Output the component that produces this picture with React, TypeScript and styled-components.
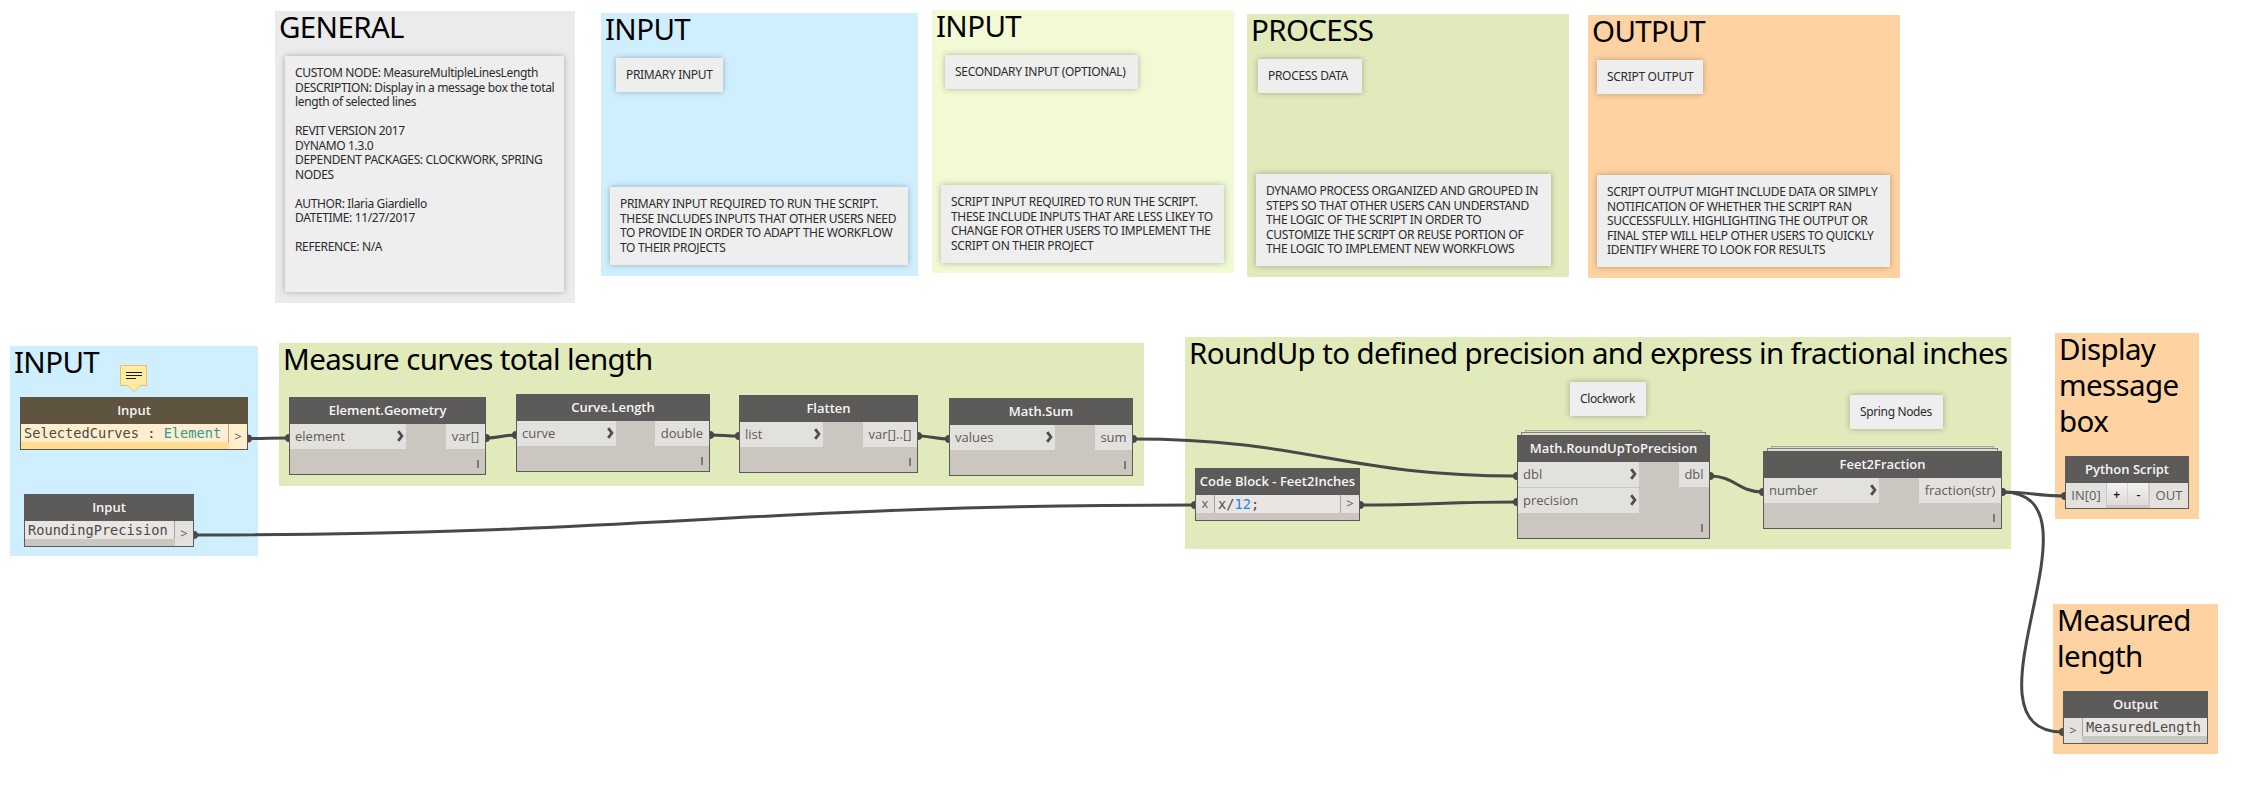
import React from 'react';
import styled, { createGlobalStyle } from 'styled-components';

const Global = createGlobalStyle`
  * { box-sizing: border-box; }
  body { margin: 0; background: #fff; }
`;

const tones = {
  gray: '#ebebeb',
  blue: '#cfefff',
  lime: '#f1fad5',
  green: '#e0eabb',
  orange: '#ffd2a2',
};
type Tone = keyof typeof tones;

interface Place {
  $x: number;
  $y: number;
  $w: number;
  $h: number;
}

const Canvas = styled.main`
  position: relative;
  width: 2250px;
  height: 790px;
  overflow: hidden;
  background: #fff;
`;

/* ---- groups ---- */

const Group = styled.section<Place & { $tone: Tone }>`
  position: absolute;
  left: ${(p) => p.$x}px;
  top: ${(p) => p.$y}px;
  width: ${(p) => p.$w}px;
  height: ${(p) => p.$h}px;
  padding: 0 0 0 4px;
  background: ${(p) => tones[p.$tone]};
`;

const GroupTitle = styled.h2`
  margin: -2px 0 0;
  font: 400 29.5px/36px 'Noto Sans', 'Open Sans', sans-serif;
  letter-spacing: -0.63px;
  color: #000;
  white-space: pre;
`;

/* ---- notes ---- */

const NoteCard = styled.article<Place & { $tight?: boolean }>`
  position: absolute;
  left: ${(p) => p.$x}px;
  top: ${(p) => p.$y}px;
  width: ${(p) => p.$w}px;
  height: ${(p) => p.$h}px;
  padding: 10px 0 0 10px;
  background: #eee;
  box-shadow: 0 0 6px rgba(0, 0, 0, 0.28);
  font: 400 12px/14.5px 'Noto Sans', 'Open Sans', sans-serif;
  letter-spacing: ${(p) => (p.$tight ? '-0.36px' : '-0.31px')};
  color: #2b2b2b;
  white-space: pre;
`;

/* ---- nodes ---- */

const NodeFrame = styled.article<Place & { $warm?: boolean }>`
  position: absolute;
  left: ${(p) => p.$x}px;
  top: ${(p) => p.$y}px;
  width: ${(p) => p.$w}px;
  height: ${(p) => p.$h}px;
  display: flex;
  flex-direction: column;
  border: 1px solid ${(p) => (p.$warm ? '#5e5440' : '#5d5b59')};
  background: ${(p) => (p.$warm ? '#ffdc92' : '#cbc6bf')};
  font-family: 'Open Sans', 'Noto Sans', sans-serif;
  font-size: 13px;
`;

const NodeHeader = styled.header<{ $warm?: boolean }>`
  flex: none;
  height: 26px;
  background: ${(p) => (p.$warm ? '#5e5440' : '#5d5b59')};
  color: #f6f6f5;
  font-weight: 600;
  line-height: 25px;
  text-align: center;
  white-space: nowrap;
`;

const PortArea = styled.div`
  display: flex;
  justify-content: space-between;
  align-items: flex-start;
`;

const PortColumn = styled.div<{ $w: number }>`
  display: flex;
  flex-direction: column;
  gap: 1px;
  width: ${(p) => p.$w}px;
`;

const Port = styled.div<{ $end?: boolean }>`
  display: flex;
  align-items: center;
  justify-content: ${(p) => (p.$end ? 'center' : 'space-between')};
  height: 25px;
  padding: 0 ${(p) => (p.$end ? 0 : 1)}px 1px ${(p) => (p.$end ? 0 : 5)}px;
  background: #e3e1de;
  color: #5d5b59;
  white-space: nowrap;
`;

const NodeFooter = styled.footer`
  display: flex;
  flex: 1;
  align-items: flex-end;
  justify-content: flex-end;
  padding: 6px;
`;

const LacingMark = styled.i`
  width: 2px;
  height: 8px;
  background: #7c7a76;
`;

const StackedSheet = styled.div<Place & { $back?: boolean }>`
  position: absolute;
  left: ${(p) => p.$x}px;
  top: ${(p) => p.$y}px;
  width: ${(p) => p.$w}px;
  height: ${(p) => p.$h}px;
  border: 1px solid ${(p) => (p.$back ? '#a6a79a' : '#82827b')};
  background: #dcdbd0;
`;

/* ---- code style nodes ---- */

const CodeRow = styled.div`
  display: flex;
  align-items: stretch;
  height: 25px;
`;

const CodeColumn = styled.div<{ $side?: 'left' | 'right' | 'both'; $warm?: boolean }>`
  flex: 1;
  height: 18px;
  padding-left: 3px;
  border: 0 solid ${(p) => (p.$warm ? '#aba8a2' : '#a3a3a3')};
  border-left-width: ${(p) => (p.$side === 'left' || p.$side === 'both' ? 1 : 0)}px;
  border-right-width: ${(p) => (p.$side === 'right' || p.$side === 'both' ? 1 : 0)}px;
  background: ${(p) => (p.$warm ? '#ffeece' : '#e8e5e2')};
  color: #4b4a48;
  font: 13.65px/18px 'DejaVu Sans Mono', 'Liberation Mono', monospace;
  white-space: pre;
`;

const SidePort = styled.div<{ $warm?: boolean; $short?: boolean }>`
  width: 18px;
  height: ${(p) => (p.$short ? 18 : 25)}px;
  background: ${(p) => (p.$warm ? '#ffeece' : '#e3e1de')};
  color: #5d5b59;
  line-height: ${(p) => (p.$short ? 17 : 24)}px;
  text-align: center;
`;

const TypeName = styled.span`
  color: #2f9b90;
`;

const NumberLiteral = styled.span`
  color: #2585e5;
`;

const PythonRow = styled.div`
  display: grid;
  grid-template-columns: 40px 21px 21px 38px;
  column-gap: 0.66px;
  height: 25px;
`;

const StepButton = styled.button`
  height: 22px;
  padding: 0;
  border: 0;
  border-right: 1px solid #d5d1cc;
  background: linear-gradient(#f3f2f1, #dfdbd6);
  color: #111;
  font: 600 12px/19px 'Open Sans', 'Noto Sans', sans-serif;
`;

/* ---- overlays ---- */

const Wires = styled.svg`
  position: absolute;
  inset: 0;
`;

const CommentIcon = styled.svg`
  position: absolute;
  left: 120px;
  top: 365px;
`;

const Chevron = () => (
  <svg width="8" height="12" viewBox="0 0 8 12">
    <path d="M1.2 1.2 L4.9 6 L1.2 10.8" fill="none" stroke="#4f4e4c" strokeWidth="2.8" />
  </svg>
);

interface NodeProps {
  x: number;
  y: number;
  w: number;
  h?: number;
  title: string;
  inputs: string[];
  output: string;
  inW: number;
  outW: number;
}

const FunctionNode = ({ x, y, w, h = 78, title, inputs, output, inW, outW }: NodeProps) => (
  <NodeFrame $x={x} $y={y} $w={w} $h={h}>
    <NodeHeader>{title}</NodeHeader>
    <PortArea>
      <PortColumn $w={inW}>
        {inputs.map((name) => (
          <Port key={name}>
            {name}
            <Chevron />
          </Port>
        ))}
      </PortColumn>
      <PortColumn $w={outW}>
        <Port $end>{output}</Port>
      </PortColumn>
    </PortArea>
    <NodeFooter>
      <LacingMark />
    </NodeFooter>
  </NodeFrame>
);

const groups: [Tone, number, number, number, number, string][] = [
  ['gray', 275, 11, 300, 292, 'GENERAL'],
  ['blue', 601, 13, 317, 263, 'INPUT'],
  ['lime', 932, 10, 302, 263, 'INPUT'],
  ['green', 1247, 14, 322, 263, 'PROCESS'],
  ['orange', 1588, 15, 312, 263, 'OUTPUT'],
  ['blue', 10, 346, 248, 210, 'INPUT'],
  ['green', 279, 343, 865, 143, 'Measure curves total length'],
  ['green', 1185, 337, 826, 212, 'RoundUp to defined precision and express in fractional inches'],
  ['orange', 2055, 333, 144, 186, 'Display\nmessage\nbox'],
  ['orange', 2053, 604, 165, 150, 'Measured\nlength'],
];

const notes: [number, number, number, number, string, boolean?][] = [
  [285, 56, 279, 236,
    'CUSTOM NODE: MeasureMultipleLinesLength\nDESCRIPTION: Display in a message box the total\nlength of selected lines\n\nREVIT VERSION 2017\nDYNAMO 1.3.0\nDEPENDENT PACKAGES: CLOCKWORK, SPRING\nNODES\n\nAUTHOR: Ilaria Giardiello\nDATETIME: 11/27/2017\n\nREFERENCE: N/A', true],
  [616, 58, 107, 34, 'PRIMARY INPUT'],
  [610, 187, 298, 78,
    'PRIMARY INPUT REQUIRED TO RUN THE SCRIPT.\nTHESE INCLUDES INPUTS THAT OTHER USERS NEED\nTO PROVIDE IN ORDER TO ADAPT THE WORKFLOW\nTO THEIR PROJECTS'],
  [945, 55, 193, 34, 'SECONDARY INPUT (OPTIONAL)'],
  [941, 185, 283, 78,
    'SCRIPT INPUT REQUIRED TO RUN THE SCRIPT.\nTHESE INCLUDE INPUTS THAT ARE LESS LIKEY TO\nCHANGE FOR OTHER USERS TO IMPLEMENT THE\nSCRIPT ON THEIR PROJECT'],
  [1258, 59, 104, 34, 'PROCESS DATA'],
  [1256, 174, 295, 92,
    'DYNAMO PROCESS ORGANIZED AND GROUPED IN\nSTEPS SO THAT OTHER USERS CAN UNDERSTAND\nTHE LOGIC OF THE SCRIPT IN ORDER TO\nCUSTOMIZE THE SCRIPT OR REUSE PORTION OF\nTHE LOGIC TO IMPLEMENT NEW WORKFLOWS'],
  [1597, 60, 106, 34, 'SCRIPT OUTPUT'],
  [1597, 175, 293, 92,
    'SCRIPT OUTPUT MIGHT INCLUDE DATA OR SIMPLY\nNOTIFICATION OF WHETHER THE SCRIPT RAN\nSUCCESSFULLY. HIGHLIGHTING THE OUTPUT OR\nFINAL STEP WILL HELP OTHER USERS TO QUICKLY\nIDENTIFY WHERE TO LOOK FOR RESULTS'],
  [1570, 382, 76, 34, 'Clockwork', true],
  [1850, 395, 93, 34, 'Spring Nodes', true],
];

const wires: [number, number, number, number][] = [
  [248, 438.5, 289, 438],
  [486, 438, 516, 435],
  [710, 435, 739, 436],
  [918, 436, 949, 439],
  [1133, 439, 1517, 476],
  [1710, 476, 1763, 492],
  [2002, 492, 2065, 496],
  [2002, 492, 2063, 732],
  [194, 535, 1195, 505],
  [1360, 505, 1517, 502],
];

const wirePath = ([x1, y1, x2, y2]: [number, number, number, number]) => {
  const reach = 0.45 * Math.hypot(x2 - x1, y2 - y1);
  return `M${x1} ${y1} C${x1 + reach} ${y1} ${x2 - reach} ${y2} ${x2} ${y2}`;
};

export default function App() {
  return (
    <Canvas>
      <Global />
      {groups.map(([tone, x, y, w, h, title]) => (
        <Group key={`${x}-${y}`} $tone={tone} $x={x} $y={y} $w={w} $h={h}>
          <GroupTitle>{title}</GroupTitle>
        </Group>
      ))}

      {notes.map(([x, y, w, h, text, tight]) => (
        <NoteCard key={`${x}-${y}`} $x={x} $y={y} $w={w} $h={h} $tight={tight}>
          {text}
        </NoteCard>
      ))}

      <Wires width="2250" height="790" viewBox="0 0 2250 790">
        {wires.map((wire) => (
          <g key={wire.join()}>
            <path d={wirePath(wire)} fill="none" stroke="#484848" strokeWidth="3" />
            <circle cx={wire[0]} cy={wire[1]} r="4" fill="#484848" />
            <circle cx={wire[2]} cy={wire[3]} r="4" fill="#484848" />
          </g>
        ))}
      </Wires>

      <CommentIcon width="28" height="28" viewBox="0 0 28 28">
        <path d="M.5 .5 H26.5 V20.5 H20 L14 26.5 L8 20.5 H.5 Z" fill="#ffeca2" stroke="#f0be5c" />
        <path d="M6 7.5 H22 M6 10.5 H22 M6 13.5 H16" stroke="#1a1a1a" />
      </CommentIcon>

      <NodeFrame $x={20} $y={397} $w={228} $h={53} $warm>
        <NodeHeader $warm>Input</NodeHeader>
        <CodeRow>
          <CodeColumn $side="right" $warm>
            SelectedCurves : <TypeName>Element</TypeName>
          </CodeColumn>
          <SidePort $warm>&gt;</SidePort>
        </CodeRow>
      </NodeFrame>

      <NodeFrame $x={24} $y={494} $w={170} $h={53}>
        <NodeHeader>Input</NodeHeader>
        <CodeRow>
          <CodeColumn $side="right">RoundingPrecision</CodeColumn>
          <SidePort>&gt;</SidePort>
        </CodeRow>
      </NodeFrame>

      <FunctionNode x={289} y={397} w={197} title="Element.Geometry" inputs={['element']} output="var[]" inW={116} outW={39} />
      <FunctionNode x={516} y={394} w={194} title="Curve.Length" inputs={['curve']} output="double" inW={99} outW={54} />
      <FunctionNode x={739} y={395} w={179} title="Flatten" inputs={['list']} output="var[]..[]" inW={83} outW={54} />
      <FunctionNode x={949} y={398} w={184} title="Math.Sum" inputs={['values']} output="sum" inW={105} outW={37} />

      <NodeFrame $x={1195} $y={468} $w={165} $h={53}>
        <NodeHeader>Code Block - Feet2Inches</NodeHeader>
        <CodeRow>
          <SidePort $short>x</SidePort>
          <CodeColumn $side="both">
            x/<NumberLiteral>12</NumberLiteral>;
          </CodeColumn>
          <SidePort $short>&gt;</SidePort>
        </CodeRow>
      </NodeFrame>

      <StackedSheet $x={1525} $y={430} $w={177} $h={6} $back />
      <StackedSheet $x={1521} $y={432} $w={185} $h={6} />
      <FunctionNode x={1517} y={435} w={193} h={104} title="Math.RoundUpToPrecision" inputs={['dbl', 'precision']} output="dbl" inW={121} outW={30} />

      <StackedSheet $x={1771} $y={446} $w={223} $h={6} $back />
      <StackedSheet $x={1767} $y={448} $w={231} $h={6} />
      <FunctionNode x={1763} y={451} w={239} title="Feet2Fraction" inputs={['number']} output="fraction(str)" inW={115} outW={82} />

      <NodeFrame $x={2065} $y={456} $w={124} $h={53}>
        <NodeHeader>Python Script</NodeHeader>
        <PythonRow>
          <Port $end>IN[0]</Port>
          <StepButton>+</StepButton>
          <StepButton>-</StepButton>
          <Port $end>OUT</Port>
        </PythonRow>
      </NodeFrame>

      <NodeFrame $x={2063} $y={691} $w={145} $h={53}>
        <NodeHeader>Output</NodeHeader>
        <CodeRow>
          <SidePort>&gt;</SidePort>
          <CodeColumn $side="left">MeasuredLength</CodeColumn>
        </CodeRow>
      </NodeFrame>
    </Canvas>
  );
}
